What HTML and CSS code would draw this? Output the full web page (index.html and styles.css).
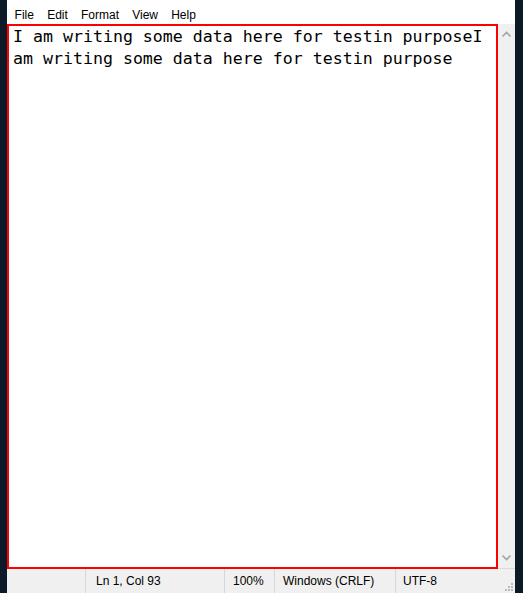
FILE: index.html
```html
<!DOCTYPE html>
<html>
<head>
<meta charset="utf-8">
<link rel="stylesheet" href="styles.css">
</head>
<body>
<div class="window">
  <div class="menubar">
    <span class="menu-item">File</span>
    <span class="menu-item">Edit</span>
    <span class="menu-item">Format</span>
    <span class="menu-item">View</span>
    <span class="menu-item">Help</span>
  </div>
  <div class="editor-row">
    <div class="editor">I am writing some data here for testin purposeI am writing some data here for testin purpose</div>
    <div class="scrollbar">
      <svg class="arrow" width="17" height="17" viewBox="0 0 17 17"><path d="M4.5 10.5 L8.5 6.5 L12.5 10.5" fill="none" stroke="#a3a3a3" stroke-width="1.6"/></svg>
      <svg class="arrow" width="17" height="17" viewBox="0 0 17 17"><path d="M4.5 6.5 L8.5 10.5 L12.5 6.5" fill="none" stroke="#a3a3a3" stroke-width="1.6"/></svg>
    </div>
  </div>
  <div class="statusbar">
    <div class="cell cell-empty"></div>
    <div class="cell cell-pos">Ln 1, Col 93</div>
    <div class="cell cell-zoom">100%</div>
    <div class="cell cell-eol">Windows (CRLF)</div>
    <div class="cell cell-enc">UTF-8
      <svg class="grip" width="10" height="10" viewBox="0 0 10 10">
        <rect x="7" y="1" width="2" height="2" fill="#bcbcbc"/>
        <rect x="4" y="4" width="2" height="2" fill="#bcbcbc"/>
        <rect x="7" y="4" width="2" height="2" fill="#bcbcbc"/>
        <rect x="1" y="7" width="2" height="2" fill="#bcbcbc"/>
        <rect x="4" y="7" width="2" height="2" fill="#bcbcbc"/>
        <rect x="7" y="7" width="2" height="2" fill="#bcbcbc"/>
      </svg>
    </div>
  </div>
</div>
</body>
</html>
```
FILE: styles.css
```css
html, body {
  margin: 0;
  padding: 0;
  height: 100%;
}
body {
  background: #0b1a26;
  overflow: hidden;
}
.window {
  margin-left: 7px;
  width: 508px;
  height: 593px;
  background: #ffffff;
  display: flex;
  flex-direction: column;
  font-family: "Liberation Sans", Arial, sans-serif;
  font-size: 12px;
  color: #000;
}
.menubar {
  height: 16px;
  padding: 7px 0 1px 1px;
  line-height: 16px;
  display: flex;
}
.menu-item {
  padding: 0 6.6px;
}
.editor-row {
  display: flex;
  height: 545px;
}
.editor {
  box-sizing: border-box;
  width: 491px;
  height: 545px;
  border: 2px solid #ff0000;
  padding: 0 4px;
  font-family: "DejaVu Sans Mono", monospace;
  font-size: 16.6px;
  line-height: 22px;
  word-break: break-all;
  background: #fff;
}
.scrollbar {
  width: 17px;
  height: 544px;
  background: #f0f0f0;
  border-bottom: 1px solid #dadada;
  display: flex;
  flex-direction: column;
  justify-content: space-between;
  padding: 0;
}
.arrow {
  display: block;
  margin: 2px 0 0;
}
.arrow + .arrow {
  margin: 0 0 2px;
}
.statusbar {
  flex: 1;
  background: #f0f0f0;
  display: flex;
  line-height: 24px;
}
.cell {
  box-sizing: border-box;
  border-left: 1px solid #d7d7d7;
  padding-left: 8px;
  white-space: nowrap;
}
.cell-empty {
  width: 78px;
  border-left: none;
}
.cell-pos {
  width: 139px;
  padding-left: 10px;
}
.cell-zoom {
  width: 50px;
}
.cell-eol {
  width: 121px;
}
.cell-enc {
  flex: 1;
  padding-left: 7px;
  position: relative;
}
.grip {
  position: absolute;
  right: 1px;
  bottom: 1px;
}
```
